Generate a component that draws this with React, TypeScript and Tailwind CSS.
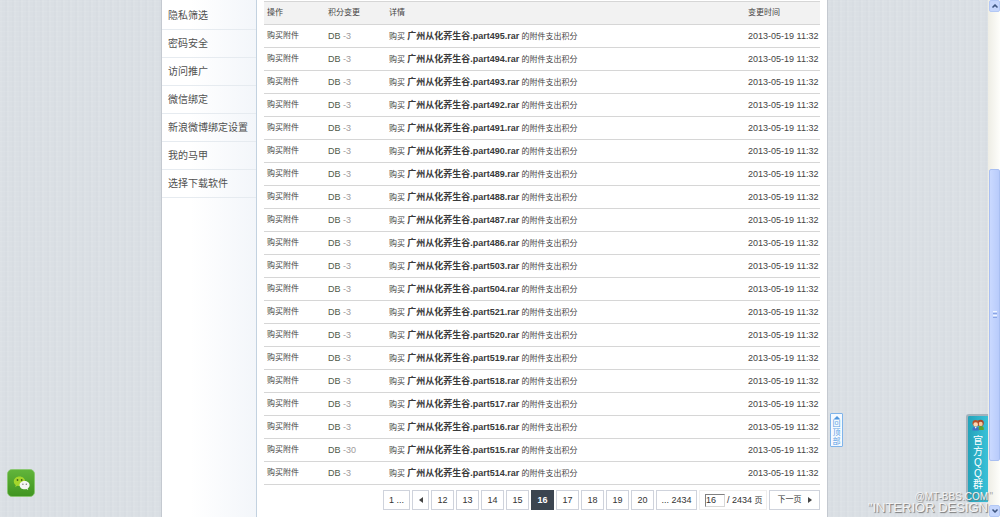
import { ChevronUp, ChevronDown } from 'lucide-react';

const menuItems = [
  '隐私筛选', '密码安全', '访问推广', '微信绑定',
  '新浪微博绑定设置', '我的马甲', '选择下载软件',
];

const records = [
  495, 494, 493, 492, 491, 490, 489, 488, 487, 486,
  503, 504, 521, 520, 519, 518, 517, 516, 515, 514,
].map((part) => ({ part, change: part === 515 ? -30 : -3, time: '2013-05-19 11:32' }));

const pages = [12, 13, 14, 15, 16, 17, 18, 19, 20];
const currentPage = 16;

const pageBox = 'h-5 border border-[#cfd3dc] bg-white flex items-center justify-center';

function Sidebar() {
  return (
    <aside className="w-[95px] shrink-0 border-r border-[#c3d2e0] bg-linear-to-r from-white from-30% to-[#f3f6fa]">
      <nav className="pt-[2px]">
        {menuItems.map((label) => (
          <a
            key={label}
            href="#"
            className="flex items-center h-7 pl-[6px] border-b border-[#e6ebf0] text-[10px] leading-[14px] text-[#505050] whitespace-nowrap"
          >
            {label}
          </a>
        ))}
      </nav>
    </aside>
  );
}

function RecordTable() {
  return (
    <table className="w-full table-fixed border-collapse text-[8px] leading-[12px] text-[#444] whitespace-nowrap">
      <colgroup>
        <col className="w-[61px]" />
        <col className="w-[61px]" />
        <col />
        <col className="w-[75px]" />
      </colgroup>
      <thead>
        <tr className="h-[23px] bg-[#f2f2f2] border-y border-[#d6d6d6] text-left">
          <th className="pl-[3px] font-normal">操作</th>
          <th className="pl-[3px] font-normal">积分变更</th>
          <th className="pl-[3px] font-normal">详情</th>
          <th className="pl-[3px] font-normal">变更时间</th>
        </tr>
      </thead>
      <tbody>
        {records.map(({ part, change, time }) => (
          <tr key={part} className="h-[23px] border-b border-[#d6d6d6]">
            <td className="pl-[3px]">购买附件</td>
            <td className="pl-[3px] text-[9px] text-[#4f5a4a]">
              DB <span className="text-[#a09a9a]">{change}</span>
            </td>
            <td className="pl-[3px]">
              购买 <a href="#" className="text-[9px] font-bold text-[#3a3a3a]">广州从化荞生谷.part{part}.rar</a> 的附件支出积分
            </td>
            <td className="pl-[3px] text-[9px]">{time}</td>
          </tr>
        ))}
      </tbody>
    </table>
  );
}

function Pagination() {
  return (
    <div className="mt-[5px] flex justify-end gap-[2px] text-[9px] leading-[12px] text-[#333] whitespace-nowrap">
      <a href="#" className={`${pageBox} w-[27px]`}>1 ...</a>
      <a href="#" aria-label="上一页" className={`${pageBox} w-[17px]`}>
        <svg width="4" height="6" viewBox="0 0 4 6"><path d="M4 0v6L0 3z" fill="#444" /></svg>
      </a>
      {pages.map((page) =>
        page === currentPage ? (
          <strong key={page} className="h-5 w-[23px] bg-[#3b4550] text-white flex items-center justify-center">
            {page}
          </strong>
        ) : (
          <a key={page} href="#" className={`${pageBox} w-[23px]`}>{page}</a>
        )
      )}
      <a href="#" className={`${pageBox} w-[41px]`}>... 2434</a>
      <label className="h-5 w-[68px] border border-[#eeeeee] bg-white flex items-center pl-[5px] gap-[2px]">
        <input
          type="text"
          defaultValue={currentPage}
          className="w-5 h-[13px] border border-[#d8d8d8] border-t-[#808080] border-l-[#808080] bg-white"
        />
        <span>/ 2434 <span className="text-[8px]">页</span></span>
      </label>
      <a href="#" className={`${pageBox} w-[51px] gap-[6px]`}>
        <span className="text-[8px]">下一页</span>
        <svg width="4" height="6" viewBox="0 0 4 6"><path d="M0 0v6l4-3z" fill="#444" /></svg>
      </a>
    </div>
  );
}

function Scrollbar() {
  const button = 'h-3 w-[11px] rounded-[2px] border border-[#b3c8f5] bg-[#c5d6fc] flex items-center justify-center';
  return (
    <div className="w-3 shrink-0 flex flex-col items-end bg-linear-to-r from-[#eeede5] to-[#fefefb]">
      <button aria-label="向上滚动" className={button}>
        <ChevronUp className="w-2 h-2 text-[#3f5680]" strokeWidth={5} />
      </button>
      <div className="grow-[160]" />
      <div className="grow-[289] w-[11px] rounded-[2px] border border-[#a9bff2] bg-linear-to-r from-[#cad9ff] to-[#b8cbfb] flex flex-col items-center justify-center gap-px">
        <span className="h-px w-1 bg-[#eef4fe]" />
        <span className="h-px w-1 bg-[#8ba6e4]" />
        <span className="h-px w-1 bg-[#eef4fe]" />
        <span className="h-px w-1 bg-[#8ba6e4]" />
      </div>
      <div className="grow-[45]" />
      <button aria-label="向下滚动" className={button}>
        <ChevronDown className="w-2 h-2 text-[#3f5680]" strokeWidth={5} />
      </button>
    </div>
  );
}

function WechatIcon() {
  return (
    <svg width="28" height="28" viewBox="0 0 28 28">
      <defs>
        <linearGradient id="wechat" x1="0" y1="0" x2="0" y2="1">
          <stop offset="0" stopColor="#62b53b" />
          <stop offset="1" stopColor="#3f9420" />
        </linearGradient>
      </defs>
      <rect x="0.5" y="0.5" width="27" height="27" rx="4.5" fill="url(#wechat)" stroke="#86c66c" strokeWidth="0.8" />
      <path d="M12.500 7.500c-3.300 0-5.700 2.200-5.700 4.900 0 1.500.7 2.800 2 3.700l-.6 1.800 2.200-1.100c.7.200 1.400.3 2.100.3 3.200 0 5.700-2.100 5.700-4.700s-2.500-4.900-5.700-4.900z" fill="#a5d62c" />
      <circle cx="10.500" cy="11" r="0.9" fill="#40651b" />
      <circle cx="14.700" cy="11" r="0.9" fill="#40651b" />
      <path d="M17.600 12.100c-2.800 0-5 1.800-5 4.100s2.200 4.100 5 4.100c.6 0 1.200-.1 1.700-.2l1.900.9-.5-1.600c1.200-.8 1.900-1.900 1.900-3.200 0-2.300-2.200-4.100-5-4.100z" fill="#f5f5f5" />
      <circle cx="15.900" cy="15.200" r="0.700" fill="#777" />
      <circle cx="19.300" cy="15.200" r="0.700" fill="#777" />
    </svg>
  );
}

function PeopleIcon() {
  return (
    <svg className="shrink-0" width="12" height="12" viewBox="0 0 12 12">
      <path d="M6.500 11V9.300C6.500 7.800 7.500 7 9 7s2.700.8 2.700 2.300V11z" fill="#5fa32f" />
      <circle cx="8.500" cy="4" r="3.300" fill="#a7472a" />
      <ellipse cx="8.700" cy="4.900" rx="2" ry="2.200" fill="#f6c9a0" />
      <path d="M0.500 11.500v-1.600C.5 8.400 1.600 7.500 3.600 7.500s3.200.9 3.200 2.400v1.600z" fill="#3f72c8" />
      <path d="M2.700 7.700h2L3.700 9.800z" fill="#fff" />
      <circle cx="3.600" cy="4.200" r="3.100" fill="#b8532c" />
      <ellipse cx="3.700" cy="5.400" rx="2.300" ry="2.200" fill="#fbd8b4" />
    </svg>
  );
}

export default function App() {
  return (
    <div className="relative flex h-screen overflow-hidden bg-[#dadfe4] bg-[repeating-linear-gradient(90deg,rgba(255,255,255,0.06)_0_2px,transparent_2px_5px,rgba(110,120,140,0.02)_5px_7px),repeating-linear-gradient(0deg,rgba(255,255,255,0.06)_0_1px,transparent_1px_5px)] font-['Liberation_Sans','Noto_Sans_CJK_SC',sans-serif]">
      <div className="flex-1 min-w-0 flex justify-center pl-px">
        <div className="flex w-[667px] border-x border-[#c4c9d0] bg-white">
          <Sidebar />
          <main className="flex-1 min-w-0 px-[7px] pt-px">
            <RecordTable />
            <Pagination />
          </main>
        </div>
      </div>
      <Scrollbar />

      {/* Floating widgets */}
      <a href="#" aria-label="微信" className="absolute left-[7px] bottom-5"><WechatIcon /></a>
      <a
        href="#"
        className="absolute right-[157px] bottom-[70px] w-[13px] h-[34px] rounded-[1px] border border-[#7fb4ea] bg-[#f4f9ff] flex flex-col items-center pt-[2px] gap-px text-[8px] leading-[8px] text-[#5b9fe3]"
      >
        <svg className="shrink-0" width="6" height="3" viewBox="0 0 6 3"><path d="M3 0l3 3H0z" fill="#4f97df" /></svg>
        <span>回</span>
        <span>顶</span>
        <span>部</span>
      </a>
      <a
        href="#"
        className="absolute right-3 bottom-[15px] w-[22px] h-[88px] rounded-l-[3px] border-2 border-r-0 border-b-0 border-[#a3b2bc] bg-linear-to-r from-[#24a3ba] to-[#39c1d8] flex flex-col items-center pt-[3px] text-[10px] leading-[11px] text-white"
      >
        <PeopleIcon />
        <span className="pt-1">官</span>
        <span>方</span>
        <span>Q</span>
        <span>Q</span>
        <span>群</span>
      </a>
      <div className="absolute right-3 bottom-[3px] text-right text-[#f4f4f4] [text-shadow:1px_1px_1px_#777] pointer-events-none">
        <p className="text-[10px] leading-[11px]">@MT-BBS.COM</p>
        <p className="text-[13px] leading-[12px]">"INTERIOR DESIGN</p>
      </div>
      <span className="absolute right-[7px] bottom-[15px] text-[10px] leading-[11px] text-[#aaa] pointer-events-none">"</span>
    </div>
  );
}
